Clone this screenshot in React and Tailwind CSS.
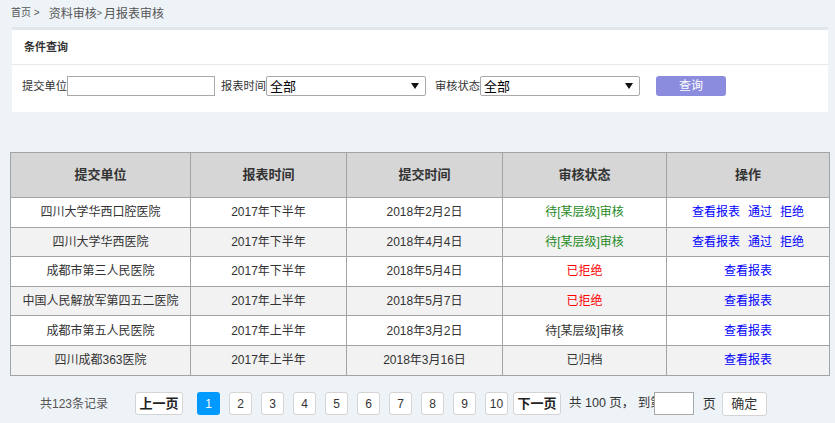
const rows = [
  { unit: "四川大学华西口腔医院", period: "2017年下半年", date: "2018年2月2日", status: "待[某层级]审核", tone: "green", full: true },
  { unit: "四川大学华西医院", period: "2017年下半年", date: "2018年4月4日", status: "待[某层级]审核", tone: "green", full: true },
  { unit: "成都市第三人民医院", period: "2017年下半年", date: "2018年5月4日", status: "已拒绝", tone: "red", full: false },
  { unit: "中国人民解放军第四五二医院", period: "2017年上半年", date: "2018年5月7日", status: "已拒绝", tone: "red", full: false },
  { unit: "成都市第五人民医院", period: "2017年上半年", date: "2018年3月2日", status: "待[某层级]审核", tone: "plain", full: false },
  { unit: "四川成都363医院", period: "2017年上半年", date: "2018年3月16日", status: "已归档", tone: "plain", full: false },
];

const toneClass = {
  green: "text-[#1f8a1f]",
  red: "text-[#ff0000]",
  plain: "text-[#333]",
};

function FakeSelect({ width }) {
  return (
    <div
      className={`${width} h-[20px] border border-[#a9a9a9] rounded-[2px] bg-white flex items-center justify-between pl-[3px] pr-[6px]`}
    >
      <span className="text-[13px] text-black leading-none">全部</span>
      <svg width="8" height="6" viewBox="0 0 8 6">
        <path d="M0 0 L8 0 L4 6 Z" fill="#111" />
      </svg>
    </div>
  );
}

function PageBtn({ children, active }) {
  return (
    <button
      className={`w-[23px] h-[23px] ml-[9px] rounded-[3px] text-[12px] leading-none flex items-center justify-center ${
        active ? "bg-[#0099ff] text-white" : "bg-white border border-[#d4d4d4] text-[#333]"
      }`}
    >
      {children}
    </button>
  );
}

export default function App() {
  return (
    <div
      className="min-h-[423px] bg-[#eef3f8] text-[#333]"
      style={{ fontFamily: '"Liberation Sans", "Noto Sans CJK SC", sans-serif' }}
    >
      {/* breadcrumb */}
      <div className="h-[27px] flex items-center pl-[11px] text-[#555]">
        <span className="text-[10px] -mt-[3px]">首页 &gt;</span>
        <span className="text-[12px] ml-[9px]">资料审核</span>
        <span className="text-[9px]">&gt;</span>
        <span className="text-[12px] ml-[2px]">月报表审核</span>
      </div>

      {/* query panel */}
      <div className="ml-[12px] w-[816px] bg-white border-t-[3px] border-[#e3e6ea]">
        <div className="h-[35px] flex items-center pl-[12px] border-b border-[#e9e9e9]">
          <span className="text-[11px] font-bold text-[#333]">条件查询</span>
        </div>
        <div className="h-[47px] flex items-start pt-[11px] pl-[10px]">
          <span className="text-[11.25px] w-[45px] h-[20px] flex items-center whitespace-nowrap">提交单位</span>
          <input className="w-[148px] h-[20px] border border-[#a9a9a9] outline-none" />
          <span className="text-[11.25px] w-[45px] h-[20px] flex items-center whitespace-nowrap ml-[6px]">报表时间</span>
          <FakeSelect width="w-[160px]" />
          <span className="text-[11.25px] w-[45px] h-[20px] flex items-center whitespace-nowrap ml-[9px]">审核状态</span>
          <FakeSelect width="w-[160px]" />
          <button className="ml-[16px] w-[70px] h-[20px] rounded-[3px] bg-[#8c8cde] text-white text-[12px] leading-none">
            查询
          </button>
        </div>
      </div>

      {/* table */}
      <table className="mt-[40px] ml-[10px] w-[819px] border-collapse table-fixed text-[12px]">
        <colgroup>
          <col className="w-[180px]" />
          <col className="w-[156px]" />
          <col className="w-[156px]" />
          <col className="w-[164px]" />
          <col className="w-[163px]" />
        </colgroup>
        <thead>
          <tr className="h-[45px] bg-[#d6d6d6]">
            {["提交单位", "报表时间", "提交时间", "审核状态", "操作"].map((h) => (
              <th key={h} className="border border-[#a3a3a3] text-[13px] font-bold text-[#333]">
                {h}
              </th>
            ))}
          </tr>
        </thead>
        <tbody>
          {rows.map((r, i) => (
            <tr key={r.unit} className={`h-[29.6px] ${i % 2 === 1 ? "bg-[#f2f2f2]" : "bg-white"}`}>
              <td className="border border-[#a3a3a3] text-center p-0">{r.unit}</td>
              <td className="border border-[#a3a3a3] text-center p-0">{r.period}</td>
              <td className="border border-[#a3a3a3] text-center p-0">{r.date}</td>
              <td className={`border border-[#a3a3a3] text-center p-0 ${toneClass[r.tone]}`}>{r.status}</td>
              <td className="border border-[#a3a3a3] text-center p-0 text-[#0000ff]">
                <a className="cursor-pointer">查看报表</a>
                {r.full && (
                  <>
                    <a className="ml-[8px] cursor-pointer">通过</a>
                    <a className="ml-[8px] cursor-pointer">拒绝</a>
                  </>
                )}
              </td>
            </tr>
          ))}
        </tbody>
      </table>

      {/* pagination */}
      <div className="mt-[16px] h-[24px] flex items-center pl-[40px]">
        <span className="text-[12px] text-[#555] w-[68px] whitespace-nowrap">共123条记录</span>
        <button className="ml-[27px] w-[48px] h-[23px] bg-white border border-[#d4d4d4] rounded-[3px] text-[13px] font-bold text-[#222] leading-none">
          上一页
        </button>
        <div className="ml-[5px] flex items-center">
          {[1, 2, 3, 4, 5, 6, 7, 8, 9, 10].map((n) => (
            <PageBtn key={n} active={n === 1}>
              {n}
            </PageBtn>
          ))}
        </div>
        <button className="ml-[5px] w-[48px] h-[23px] bg-white border border-[#d4d4d4] rounded-[3px] text-[13px] font-bold text-[#222] leading-none">
          下一页
        </button>
        <span className="ml-[8px] text-[12.5px] text-[#333] whitespace-nowrap">共 100 页， 到第</span>
        <input className="-ml-[9px] w-[40px] h-[23px] bg-white border border-[#a9a9a9] outline-none relative" />
        <span className="ml-[9px] text-[13px] text-[#333]">页</span>
        <button className="ml-[6px] w-[45px] h-[24px] bg-white border border-[#d4d4d4] rounded-[3px] text-[13px] text-[#333] leading-none">
          确定
        </button>
      </div>
    </div>
  );
}
